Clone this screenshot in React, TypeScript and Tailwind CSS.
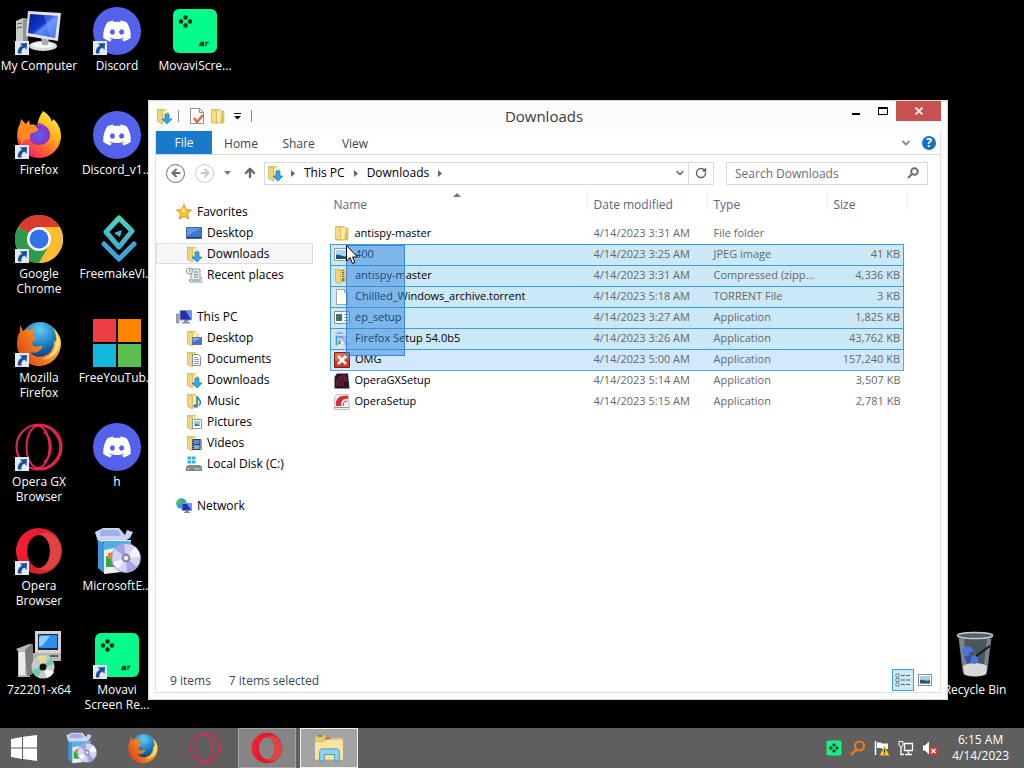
import React from 'react';
import { FaDiscord } from 'react-icons/fa';
import { ArrowLeft, ArrowRight, ArrowUp, ChevronDown, RotateCw } from 'lucide-react';

type IconProps = { className?: string };

/* ---------- Large icons ---------- */

const MyComputerIcon = ({ className }: IconProps) => (
  <svg viewBox="0 0 48 48" className={className} aria-hidden="true">
    <defs>
      <linearGradient id="mc-screen" x1="0" y1="0" x2="1" y2="1">
        <stop offset="0" stopColor="#0a1f8f" />
        <stop offset="0.45" stopColor="#1236c9" />
        <stop offset="0.55" stopColor="#5f8df5" />
        <stop offset="1" stopColor="#2a55e0" />
      </linearGradient>
    </defs>
    <path d="M1 14l7-3 5 1v24l-5 2-7-3z" fill="#c9cbc8" />
    <path d="M8 11l5 1v24l-5 2z" fill="#90938f" />
    <path d="M2 17l5-1M2 21l5-1" stroke="#555" />
    <ellipse cx="28" cy="39" rx="14" ry="5" fill="#d9dbdc" />
    <ellipse cx="28" cy="38" rx="11" ry="3" fill="#f4f5f5" />
    <path d="M26 30l8 1-1 7h-6z" fill="#a9adb0" />
    <path d="M13 4l33 2-3 28-32-5z" fill="#e1e3e4" />
    <path d="M15 7l28 2-3 22-27-5z" fill="url(#mc-screen)" />
    <path d="M29 8l14 1-3 22-5-1z" fill="#8fb4ff" opacity="0.35" />
  </svg>
);

const DiscordIcon = ({ className }: IconProps) => (
  <span className={`flex items-center justify-center rounded-full bg-[#5462eb] text-white ${className}`}>
    <FaDiscord className="size-[30px]" />
  </span>
);

const MovaviIcon = ({ className }: IconProps) => (
  <svg viewBox="0 0 48 48" className={className} aria-hidden="true">
    <rect x="2" y="2" width="44" height="44" rx="6" fill="#05fb8a" />
    <g fill="#052a18">
      <circle cx="14.500" cy="10.500" r="2.200" />
      <circle cx="10" cy="14.500" r="2.200" />
      <circle cx="19" cy="14.500" r="2.200" />
      <circle cx="14.500" cy="18.500" r="2.200" />
    </g>
    <path d="M29.500 35.500h3v3h-3.500v-1.500h3M35 39v-3.500h2.500" fill="none" stroke="#063d22" strokeWidth="1.300" />
  </svg>
);

const FirefoxIcon = ({ className }: IconProps) => (
  <svg viewBox="0 0 48 48" className={className} aria-hidden="true">
    <defs>
      <linearGradient id="fx-flame" x1="0.850" y1="0.050" x2="0.200" y2="0.950">
        <stop offset="0" stopColor="#fff44f" />
        <stop offset="0.350" stopColor="#ffb31a" />
        <stop offset="0.650" stopColor="#ff6a2f" />
        <stop offset="1" stopColor="#f5156c" />
      </linearGradient>
      <radialGradient id="fx-globe">
        <stop offset="0" stopColor="#5a5ff0" />
        <stop offset="1" stopColor="#8b2fc9" />
      </radialGradient>
    </defs>
    <path d="M28 0c6 4 8 7 9 11l1-3c5 4 8 10 8 17 0 12-10 22-22 22S2 37 2 25c0-5 1-9 3-12l1-5 5 5 3-4 1 5c3-1 5 0 7 1 1-6 3-11 6-15z" fill="url(#fx-flame)" />
    <path d="M24 14c6-1 11 4 11 10s-5 10-11 10-10-4-10-9c0-6 4-10 10-11z" fill="url(#fx-globe)" />
    <path d="M5 13l6 1 4 1c4-1 6 0 8 3 1 2-4 4-7 4-1 2-2 3 0 6-5-1-8 2-9 5-4-5-5-14-2-20z" fill="#ff8a1f" />
    <path d="M22 15c5-1 8 2 10 3-2-4-5-6-9-6z" fill="#a93cdd" />
  </svg>
);

const OldFirefoxIcon = ({ className }: IconProps) => (
  <svg viewBox="0 0 48 48" className={className} aria-hidden="true">
    <defs>
      <radialGradient id="ofx-globe" cx="0.500" cy="0.200" r="0.800">
        <stop offset="0" stopColor="#62cdf3" />
        <stop offset="0.600" stopColor="#1573ba" />
        <stop offset="1" stopColor="#0b2f6b" />
      </radialGradient>
      <linearGradient id="ofx-tail" x1="1" y1="0.200" x2="0" y2="0.800">
        <stop offset="0" stopColor="#ffe95c" />
        <stop offset="0.400" stopColor="#f98f24" />
        <stop offset="1" stopColor="#d93f13" />
      </linearGradient>
    </defs>
    <circle cx="25" cy="22" r="19" fill="url(#ofx-globe)" />
    <path d="M5 6l3 6c3-2 5-2 7-1l5-1-2 5 1 3c3 0 2 2 0 3l-2 3c0 3 4 5 8 3 3-1 3 1 1 3-3 4-8 5-11 2 2 5 8 7 14 5 7-2 11-9 10-16l2 2c1-5-1-11-3-14 5 4 8 10 8 15 0 13-10 23-22 23S2 37 2 25C2 19 3 15 5 13z" fill="url(#ofx-tail)" />
    <path d="M42 16c1 11-4 21-15 24 11 1 18-8 17-19z" fill="#fff3a0" opacity="0.700" />
  </svg>
);

const ChromeIcon = ({ className }: IconProps) => (
  <svg viewBox="0 0 48 48" className={className} aria-hidden="true">
    <circle cx="24" cy="24" r="24" fill="#f9bd2d" />
    <path d="M24 24L3.200 12A24 24 0 0 1 44.800 12z" fill="#da3b2f" />
    <path d="M24 24L3.200 12A24 24 0 0 0 24 48L34.400 30z" fill="#2e9a4d" />
    <path d="M24 12h20.800A24 24 0 0 1 24 48l10.400-18z" fill="#f9bd2d" />
    <circle cx="24" cy="24" r="12" fill="#fff" />
    <circle cx="24" cy="24" r="9.500" fill="#2f74e8" />
  </svg>
);

const FreemakeIcon = ({ className }: IconProps) => (
  <svg viewBox="0 0 48 48" className={className} aria-hidden="true">
    <defs>
      <linearGradient id="fm" x1="0" y1="0" x2="0" y2="48" gradientUnits="userSpaceOnUse">
        <stop offset="0" stopColor="#4fd5b8" />
        <stop offset="1" stopColor="#3c9be0" />
      </linearGradient>
    </defs>
    <path d="M26 3l13 13-13 16-13-15z" fill="none" stroke="url(#fm)" strokeWidth="5" strokeLinejoin="round" />
    <path d="M11 29l15 15 15-15" fill="none" stroke="#3fa3d8" strokeWidth="5" strokeLinecap="round" strokeLinejoin="round" />
    <path d="M21 18l8-3-2 7z" fill="#45b9c9" />
  </svg>
);

const FreeYouTubeIcon = ({ className }: IconProps) => (
  <span className={`grid grid-cols-2 gap-0.5 ${className}`}>
    <span className="bg-[#ec3d40]" />
    <span className="bg-[#ff8500]" />
    <span className="bg-[#12b9db]" />
    <span className="bg-[#58bf50]" />
  </span>
);

const OperaGxIcon = ({ className }: IconProps) => (
  <svg viewBox="0 0 48 48" className={className} aria-hidden="true" fill="none" stroke="#e3264f">
    <circle cx="24" cy="24" r="22.500" strokeWidth="2.200" />
    <ellipse cx="23" cy="24" rx="11.500" ry="21" strokeWidth="2" />
    <path d="M20 3c12-3 25 8 25 21S32 48 20 45" strokeWidth="1.500" />
    <path d="M29 9c9 6 9 24 0 30" strokeWidth="2" />
  </svg>
);

const OperaIcon = ({ className }: IconProps) => (
  <svg viewBox="0 0 48 48" className={className} aria-hidden="true">
    <defs>
      <linearGradient id="op" x1="0" y1="0" x2="1" y2="0.300">
        <stop offset="0" stopColor="#ff2234" />
        <stop offset="0.500" stopColor="#e3192d" />
        <stop offset="1" stopColor="#c9302f" />
      </linearGradient>
    </defs>
    <path fillRule="evenodd" d="M24 1a23 23 0 1 0 0 46a23 23 0 1 0 0-46zM24 8c6 0 11 7 11 16s-5 17-11 17-12-8-12-17S18 8 24 8z" fill="url(#op)" />
    <path d="M24 8c9-7 22 2 22 16S33 48 24 41c6 0 11-8 11-17S30 8 24 8z" fill="#fb6a5e" opacity="0.400" />
  </svg>
);

const InstallerIcon = ({ className }: IconProps) => (
  <svg viewBox="0 0 48 48" className={className} aria-hidden="true">
    <path d="M2 5l8-4h16l6 7 2-5 6 2-3 6-7 4H5z" fill="#c9d4f2" />
    <path d="M8 3h17l3 6H7z" fill="#a3aee2" />
    <path d="M5 13l6 3v30l-6-5z" fill="#3b9ad9" />
    <path d="M11 13h27v31l-27 3z" fill="#eaf1fa" />
    <path d="M11 14h27v4l-27 5z" fill="#53afe5" />
    <path d="M13 29h8v11h-8z" fill="#38a843" />
    <path d="M15 26l5-1v6l-5 1z" fill="#f0862b" />
    <circle cx="33" cy="31" r="14.500" fill="#d3d4f3" stroke="#9698bd" />
    <path d="M33 31L22 22a14 14 0 0 1 9-5z" fill="#a5a3e8" />
    <path d="M33 31l11 9a14 14 0 0 1-10 5z" fill="#a5a3e8" />
    <path d="M33 31l9-11a14 14 0 0 1 5 10zM33 31L20 35a14 14 0 0 0 5 7z" fill="#f5f5ff" />
    <circle cx="33" cy="31" r="3.500" fill="#c9cbdc" stroke="#70728c" strokeWidth="1.500" />
    <circle cx="33" cy="31" r="1.500" fill="#fff" />
  </svg>
);

const SevenZipIcon = ({ className }: IconProps) => (
  <svg viewBox="0 0 48 48" className={className} aria-hidden="true">
    <path d="M20 0h26v22H20z" fill="#d4d3cc" />
    <path d="M23 3h20v16H23z" fill="#14264b" />
    <path d="M24 4h18v13H24z" fill="#2f8fe8" />
    <path d="M26 5h9l-8 10h-3V7z" fill="#8cd0ff" />
    <path d="M15 22h31v8H15z" fill="#b5b4ae" />
    <path d="M35 25h8" stroke="#444" strokeWidth="1.500" />
    <path d="M1 18l13-5h4l-3 6v27H3V20z" fill="#bbbab7" />
    <path d="M4 21h6v23H4z" fill="#ecebea" />
    <path d="M10 19l6-6 2 2v28l-6 3z" fill="#7c7b79" />
    <circle cx="28" cy="36" r="11.500" fill="#c5cbc8" />
    <path d="M28 36l-6-10a12 12 0 0 1 10-1z" fill="#e3df92" />
    <path d="M28 36l-11 3a12 12 0 0 0 6 7zM28 36l11-3a12 12 0 0 0-4-6z" fill="#66c9b7" />
    <path d="M28 36l4 11a12 12 0 0 0 7-6z" fill="#f5f5f5" />
    <circle cx="28" cy="36" r="3.500" fill="#111" />
  </svg>
);

const RecycleBinIcon = ({ className }: IconProps) => (
  <svg viewBox="0 0 48 48" className={className} aria-hidden="true">
    <path d="M7 4l5 39c4 4 20 4 24 0l5-39z" fill="#4b555b" />
    <path d="M8 8l4 33h5L13 8zM36 8l-4 33h4l4-33z" fill="#8d979c" opacity="0.700" />
    <path d="M12 35c5-4 19-4 24 0l-1 8c-5 3-17 3-22 0z" fill="#d7d9d8" />
    <path d="M11 19l4-4 5 1 3 4-5 1 1 4-6 2zM20 26l5-3 3 7-4 3-5-1z" fill="#4c73df" />
    <path d="M13 26l5-2 2 6-4 2z" fill="#2f4fb5" />
    <path d="M25 25l14-10" stroke="#10171b" strokeWidth="2" />
    <ellipse cx="24" cy="4.500" rx="17.500" ry="3" fill="#566167" stroke="#c3cacc" strokeWidth="1.500" />
  </svg>
);

const ExplorerIcon = ({ className }: IconProps) => (
  <svg viewBox="0 0 34 30" className={className} aria-hidden="true">
    <path d="M2 4l2-3h8l2 3h16l2 4v20H2z" fill="#e2c76c" />
    <path d="M5 2h5" stroke="#35a35d" strokeWidth="2" />
    <path d="M13 5h6" stroke="#d3603d" strokeWidth="2" />
    <path d="M21 7h8" stroke="#4596d8" strokeWidth="2" />
    <path d="M2 9h10l3-3h17v21H2z" fill="#f7e6a2" />
    <path d="M7 29V19c0-2 1-3 3-3h15c2 0 3 1 3 3v10h-5v-7H12v7z" fill="#8fd3ef" stroke="#3f95c5" />
  </svg>
);

/* ---------- Small icons ---------- */

const FolderBase = () => (
  <>
    <path d="M2 1h8v3h2.500v11H5L2 14z" fill="#e3c766" />
    <path d="M4 2.500h6l1 1V15H4z" fill="#f8eeb2" />
    <path d="M1.500 1L6.500 3v13l-5-2.500z" fill="#efd577" stroke="#bfa24c" strokeWidth="0.600" />
  </>
);

const Small = ({ children }: { children: React.ReactNode }) => (
  <svg viewBox="0 0 16 16" className="size-4 shrink-0" aria-hidden="true">
    {children}
  </svg>
);

const FolderIcon = () => (
  <Small>
    <path d="M2 1.500h8l1 1.500h3v12H2z" fill="#e9cd6b" stroke="#cdae50" strokeWidth="0.600" />
    <path d="M7 3h4v11H7z" fill="#f9efb4" />
    <path d="M1.500 1.500L6.500 3v12.500l-5-1.500z" fill="#f3dc82" stroke="#cdae50" strokeWidth="0.600" />
    <path d="M10.500 8l3.500-1v8h-3.500z" fill="#dfbf57" />
  </Small>
);

const DownloadsIcon = () => (
  <Small>
    <FolderBase />
    <path d="M9 6h4v5h3l-5 5-5-5h3z" fill="#35a7e6" stroke="#1873b5" strokeWidth="0.700" />
  </Small>
);

const StarIcon = () => (
  <Small>
    <path d="M8 0.500l2.200 5 5.300.500-4 3.700 1.200 5.300L8 12.300 3.300 15l1.200-5.300-4-3.700 5.300-.500z" fill="#fcc52f" stroke="#d98a1d" strokeWidth="0.900" />
    <path d="M8 3l1 4-4 1z" fill="#fff2a8" />
  </Small>
);

const DesktopSmallIcon = () => (
  <Small>
    <path d="M0.500 2.500h15v11H0.500z" fill="#3d78cf" stroke="#51617e" />
    <path d="M1 3h14L1 11z" fill="#5e9beb" />
    <path d="M1 12.500h14" stroke="#24406f" />
  </Small>
);

const RecentIcon = () => (
  <Small>
    <path d="M5 2h9v9h2v4H5c-1.500 0-2-1-2-2h2z" fill="#e6ebee" stroke="#8b979e" />
    <path d="M8 5h4M8 7.500h4M8 10h4M6 13h8" stroke="#74828a" />
    <circle cx="3.500" cy="4" r="3" fill="#f5f7f8" stroke="#8b979e" />
    <path d="M3.500 2.500V4H5" stroke="#667" fill="none" strokeWidth="0.800" />
  </Small>
);

const ThisPcIcon = () => (
  <Small>
    <path d="M0.500 5h2.500v9H0.500z" fill="#aab0b4" stroke="#6f7679" strokeWidth="0.700" />
    <path d="M4 1.500h11.500v9.500H4z" fill="#1d2fb4" stroke="#9097a5" />
    <path d="M9.500 2H15v8.500z" fill="#6f8df0" />
    <path d="M8 11h4v2H8zM6 13h8v1.500H6z" fill="#8b9196" />
  </Small>
);

const DesktopFolderIcon = () => (
  <Small>
    <FolderBase />
    <path d="M6.500 7.500h9v7h-9z" fill="#4374cc" stroke="#60718f" />
    <path d="M7 8h8l-8 4z" fill="#7ba8ee" />
  </Small>
);

const DocumentsIcon = () => (
  <Small>
    <FolderBase />
    <path d="M6.500 3.500h6l2 2v9h-8z" fill="#fff" stroke="#8b9098" />
    <path d="M8 6.500h4M8 8.500h5M8 10.500h5M8 12.500h5" stroke="#8290a5" strokeWidth="0.900" />
  </Small>
);

const MusicIcon = () => (
  <Small>
    <FolderBase />
    <path d="M11 3v9.500M11 3c0 3 3.500 3 3.500 6.500 0 1-.500 2-1.500 3" fill="none" stroke="#2b83c2" strokeWidth="1.600" />
    <ellipse cx="9.500" cy="13" rx="2.200" ry="1.700" fill="#2b83c2" />
  </Small>
);

const PicturesIcon = () => (
  <Small>
    <FolderBase />
    <path d="M6.500 5.500h9v9h-9z" fill="#fff" stroke="#8e99a6" />
    <path d="M8 7h6v5H8z" fill="#9cc8ea" />
    <path d="M8 12l2.500-2.500L14 12z" fill="#3f6f8e" />
  </Small>
);

const VideosIcon = () => (
  <Small>
    <FolderBase />
    <path d="M6 4h9.500v11H6z" fill="#343b46" />
    <path d="M8 5h5.500v4H8z" fill="#4c92d6" />
    <path d="M8 10h5.500v4H8z" fill="#79b0db" />
    <path d="M7 4.500v10M14.500 4.500v10" stroke="#fff" strokeDasharray="1 1.200" strokeWidth="0.900" />
  </Small>
);

const DiskIcon = () => (
  <Small>
    <path d="M1.500 0.500h3.500v3H1.500zM6 0.500h3.500v3H6zM1.500 4.500h3.500v3H1.500zM6 4.500h3.500v3H6z" fill="#27b7d6" />
    <path d="M2 9h12l2 2v4H0v-4z" fill="#7e909a" />
    <path d="M0.500 11h15v3.500H0.500z" fill="#a5b6c0" stroke="#5e6e78" strokeWidth="0.700" />
    <path d="M3 13h6" stroke="#51616b" />
    <path d="M12 13h2" stroke="#42c95b" strokeWidth="1.200" />
  </Small>
);

const NetworkIcon = () => (
  <Small>
    <circle cx="5.500" cy="5.500" r="5.300" fill="#2b9fd6" />
    <path d="M2 2.500c3-2 4 0 3 2s-3 1-4 3c-1-2-.500-4 1-5zM6 6l3-3 1 3-2 4H6z" fill="#58bf5c" />
    <path d="M6 5.500h9.500v7H6z" fill="#1c32bd" stroke="#8d97ac" />
    <path d="M11 6h4v6z" fill="#7590f1" />
    <path d="M9.500 13h3v1.500h-3zM8 14.500h6" fill="#848b92" stroke="#848b92" />
  </Small>
);

const JpegIcon = () => (
  <Small>
    <path d="M0.500 1.500h15v12H0.500z" fill="#fff" stroke="#9b9b9b" />
    <path d="M2 3h12v9H2z" fill="#a8d8f0" />
    <path d="M2 8c4-1 7 3 12 1v3H2z" fill="#264f70" />
  </Small>
);

const ZipIcon = () => (
  <Small>
    <FolderBase />
    <path d="M7 1.500h5.500v13H7z" fill="#ecd16f" />
    <path d="M9 2v9" stroke="#666" strokeWidth="2" strokeDasharray="1 1" />
    <path d="M8 10h2.500v3.500H8z" fill="#7a7a7a" />
  </Small>
);

const BlankFileIcon = () => (
  <Small>
    <path d="M2.500 0.500h8l3 3v12h-11z" fill="#fff" stroke="#a5a5a5" />
    <path d="M10.500 0.500v3h3" fill="none" stroke="#a5a5a5" />
  </Small>
);

const AppIcon = () => (
  <Small>
    <path d="M0.500 1.500h15v12H0.500z" fill="#fff" stroke="#8f8f8f" />
    <path d="M2 4h6v7H2z" fill="#3f7565" />
    <path d="M10 4.500h4M10 7.500h4M10 10.500h4" stroke="#9a9a9a" />
  </Small>
);

const FirefoxSetupIcon = () => <InstallerIcon className="size-4 shrink-0" />;

const OmgIcon = () => (
  <Small>
    <path d="M0.500 0.500h15v15H0.500z" fill="#c63c26" stroke="#83210f" />
    <path d="M1 1h14v6L1 9z" fill="#e06a4c" />
    <path d="M4 4l8 8M12 4l-8 8" stroke="#fff" strokeWidth="2.600" />
  </Small>
);

const GxSetupIcon = () => (
  <Small>
    <path d="M3 0.500h11l1.500 15H0.500V4z" fill="#2c1626" />
    <path d="M3 13C2 6 6 2 12 3M6 13c-1-6 2-9 7-8M9 13c-1-4 1-7 5-6" fill="none" stroke="#b41f4e" />
  </Small>
);

const OperaSetupIcon = () => (
  <Small>
    <path d="M3 0.500h11l1.500 15H0.500V4z" fill="#f4f3f3" stroke="#b2adad" strokeWidth="0.800" />
    <path d="M2 12C1 4 6 1 14 2v3C9 4 7 7 7 12z" fill="#db2b34" />
    <path d="M9 12c0-3 1-5 4-5" stroke="#db2b34" fill="none" />
    <path d="M1 13.500h14" stroke="#9b9696" />
  </Small>
);

const ShortcutBadge = () => (
  <svg viewBox="0 0 14 14" className="absolute bottom-0 left-0 size-3.5" aria-hidden="true">
    <path d="M0 0h14v14H0z" fill="#dfe8f4" />
    <path d="M3 12.500C2.500 8 4.500 5.500 7 5L5 2.500l7-.500-.500 7L9.500 6.500C7 7.500 6 9.500 6.500 12.500z" fill="#1c4f94" />
  </svg>
);

/* ---------- Desktop ---------- */

type DesktopItem = {
  label: string;
  icon: React.FC<IconProps>;
  shortcut?: boolean;
  last?: boolean;
};

const desktopItems: DesktopItem[] = [
  { label: 'My Computer', icon: MyComputerIcon, shortcut: true },
  { label: 'Firefox', icon: FirefoxIcon, shortcut: true },
  { label: 'Google Chrome', icon: ChromeIcon, shortcut: true },
  { label: 'Mozilla Firefox', icon: OldFirefoxIcon, shortcut: true },
  { label: 'Opera GX Browser', icon: OperaGxIcon, shortcut: true },
  { label: 'Opera Browser', icon: OperaIcon, shortcut: true },
  { label: '7z2201-x64', icon: SevenZipIcon },
  { label: 'Discord', icon: DiscordIcon, shortcut: true },
  { label: 'Discord_v1...', icon: DiscordIcon },
  { label: 'FreemakeVi...', icon: FreemakeIcon },
  { label: 'FreeYouTub...', icon: FreeYouTubeIcon },
  { label: 'h', icon: DiscordIcon },
  { label: 'MicrosoftE...', icon: InstallerIcon },
  { label: 'Movavi Screen Re...', icon: MovaviIcon, shortcut: true },
  { label: 'MovaviScre...', icon: MovaviIcon },
  { label: 'Recycle Bin', icon: RecycleBinIcon, last: true },
];

const DesktopIcons = () => (
  <div className="grid grid-flow-col auto-cols-[78px] grid-rows-[repeat(7,104px)]">
    {desktopItems.map(({ label, icon: Icon, shortcut, last }) => (
      <button
        key={label}
        className={`flex flex-col items-center pt-[7px] text-white ${last ? 'col-start-13 row-start-7' : ''}`}
      >
        <span className="relative mb-[3px] block size-12">
          <Icon className="size-12" />
          {shortcut && <ShortcutBadge />}
        </span>
        <span className="max-w-full text-center leading-[15px]">{label}</span>
      </button>
    ))}
  </div>
);

/* ---------- Explorer window ---------- */

const TitleBar = () => (
  <div className="relative flex h-[30px] shrink-0 items-center">
    <div className="flex items-center pl-px">
      <DownloadsIcon />
      <span className="ml-1.5 h-3 w-px bg-[#8a8a8a]" />
      <button aria-label="Properties" className="ml-2.5">
        <Small>
          <path d="M1.500 0.500h9l4 4v11h-13z" fill="#fff" stroke="#8a8f99" />
          <path d="M10.500 0.500v4h4" fill="none" stroke="#8a8f99" />
          <path d="M5 10l3 4 6-7" fill="none" stroke="#e2683b" strokeWidth="2.500" />
        </Small>
      </button>
      <button aria-label="New folder" className="ml-[5px]">
        <FolderIcon />
      </button>
      <button aria-label="Customize Quick Access Toolbar" className="ml-2">
        <svg viewBox="0 0 7 7" className="size-[7px]" aria-hidden="true">
          <path d="M0 0h7v1H0zM0 3h7L3.500 6.500z" fill="#111" />
        </svg>
      </button>
      <span className="ml-2.5 h-3 w-px bg-[#8a8a8a]" />
    </div>
    <h1 className="pointer-events-none absolute inset-x-0 pr-2 text-center text-[15px] leading-7 text-[#3a3a3a]">
      Downloads
    </h1>
    <div className="ml-auto flex h-full items-start">
      <button aria-label="Minimize" className="flex h-5 w-[27px] items-center justify-center">
        <span className="mt-1.5 h-0.5 w-2 bg-black" />
      </button>
      <button aria-label="Maximize" className="flex h-5 w-[27px] items-center justify-center">
        <span className="h-2 w-2.5 border border-t-2 border-black" />
      </button>
      <button aria-label="Close" className="flex h-5 w-[45px] items-center justify-center bg-[#c75050]">
        <svg viewBox="0 0 8 8" className="size-2" aria-hidden="true">
          <path d="M0.500 0.500l7 7M7.500 0.500l-7 7" stroke="#fff" strokeWidth="1.600" />
        </svg>
      </button>
    </div>
  </div>
);

const RibbonTabs = () => (
  <div className="flex h-6 shrink-0 items-stretch border-b border-[#dadbdc] text-[#444]">
    <button className="w-14 bg-[#1979ca] text-white">File</button>
    <button className="w-[58px] pt-0.5">Home</button>
    <button className="w-[57px] pt-0.5">Share</button>
    <button className="w-14 pt-0.5">View</button>
    <div className="ml-auto flex items-center gap-2.5 pr-1">
      <button aria-label="Expand the Ribbon">
        <ChevronDown className="size-3 text-[#8f8f8f]" strokeWidth={4} />
      </button>
      <button
        aria-label="Help"
        className="flex size-3.5 items-center justify-center rounded-full bg-[#1a6fc4] font-bold text-white"
      >
        ?
      </button>
    </div>
  </div>
);

const Caret = () => (
  <svg viewBox="0 0 4 7" className="h-[7px] w-1" aria-hidden="true">
    <path d="M0 0l4 3.500L0 7z" fill="#666" />
  </svg>
);

const AddressRow = () => (
  <div className="flex h-9 shrink-0 items-center pr-3 pl-2.5">
    <button
      aria-label="Back"
      className="flex size-[19px] items-center justify-center rounded-full border border-[#6e6e6e] text-[#6e6e6e]"
    >
      <ArrowLeft className="size-3" strokeWidth={4} />
    </button>
    <button
      aria-label="Forward"
      disabled
      className="ml-2.5 flex size-[19px] items-center justify-center rounded-full border border-[#c9c9c9] text-[#c9c9c9]"
    >
      <ArrowRight className="size-3" strokeWidth={4} />
    </button>
    <button aria-label="Recent locations" className="ml-2.5">
      <svg viewBox="0 0 7 4" className="h-1 w-[7px]" aria-hidden="true">
        <path d="M0 0h7L3.500 4z" fill="#777" />
      </svg>
    </button>
    <button aria-label="Up" className="ml-3">
      <ArrowUp className="size-3.5 text-[#666]" strokeWidth={4} />
    </button>
    <div className="ml-[7px] flex h-[23px] flex-1 items-center border border-[#d9d9d9]">
      <span className="ml-0.5">
        <DownloadsIcon />
      </span>
      <nav aria-label="Address" className="ml-2 flex items-center gap-[9px]">
        <Caret />
        <a href="#this-pc">This PC</a>
        <Caret />
        <a href="#downloads">Downloads</a>
        <Caret />
      </nav>
      <button aria-label="Previous locations" className="ml-auto flex w-4 justify-center">
        <ChevronDown className="size-3 text-[#666]" strokeWidth={3} />
      </button>
      <button
        aria-label="Refresh"
        className="flex h-full w-[25px] items-center justify-center border-l border-[#d9d9d9]"
      >
        <RotateCw className="size-3 text-[#666]" strokeWidth={3} />
      </button>
    </div>
    <div className="ml-3 flex h-[23px] w-[202px] items-center border border-[#d9d9d9] px-2">
      <input
        type="text"
        aria-label="Search Downloads"
        placeholder="Search Downloads"
        className="h-full w-full min-w-0 bg-transparent outline-none placeholder:text-[#6d6d6d]"
      />
      <svg viewBox="0 0 12 12" className="size-3 shrink-0" fill="none" stroke="#6d6d6d" strokeWidth="2" aria-hidden="true">
        <circle cx="7.500" cy="4.500" r="3.300" />
        <path d="M5 7L1 11" />
      </svg>
    </div>
  </div>
);

type NavGroup = {
  title: string;
  icon: React.FC;
  items: { label: string; icon: React.FC; active?: boolean }[];
};

const navGroups: NavGroup[] = [
  {
    title: 'Favorites',
    icon: StarIcon,
    items: [
      { label: 'Desktop', icon: DesktopSmallIcon },
      { label: 'Downloads', icon: DownloadsIcon, active: true },
      { label: 'Recent places', icon: RecentIcon },
    ],
  },
  {
    title: 'This PC',
    icon: ThisPcIcon,
    items: [
      { label: 'Desktop', icon: DesktopFolderIcon },
      { label: 'Documents', icon: DocumentsIcon },
      { label: 'Downloads', icon: DownloadsIcon },
      { label: 'Music', icon: MusicIcon },
      { label: 'Pictures', icon: PicturesIcon },
      { label: 'Videos', icon: VideosIcon },
      { label: 'Local Disk (C:)', icon: DiskIcon },
    ],
  },
  { title: 'Network', icon: NetworkIcon, items: [] },
];

const NavPane = () => (
  <nav aria-label="Folders" className="flex w-[157px] shrink-0 flex-col gap-[21px] pt-2.5">
    {navGroups.map(({ title, icon: GroupIcon, items }) => (
      <div key={title}>
        <a href="#group" className="flex h-[21px] items-center gap-[5px] pl-5">
          <GroupIcon />
          {title}
        </a>
        {items.map(({ label, icon: Icon, active }) => (
          <a
            key={label}
            href="#folder"
            className={`flex h-[21px] items-center gap-[5px] border pl-[29px] ${
              active ? 'border-[#dedede] bg-[#f7f7f7]' : 'border-transparent'
            }`}
          >
            <Icon />
            {label}
          </a>
        ))}
      </div>
    ))}
  </nav>
);

type FileRow = {
  name: string;
  icon: React.FC;
  date: string;
  type: string;
  size: string;
  state?: 'selected' | 'focused';
};

const files: FileRow[] = [
  { name: 'antispy-master', icon: FolderIcon, date: '4/14/2023 3:31 AM', type: 'File folder', size: '' },
  { name: '400', icon: JpegIcon, date: '4/14/2023 3:25 AM', type: 'JPEG image', size: '41 KB', state: 'selected' },
  { name: 'antispy-master', icon: ZipIcon, date: '4/14/2023 3:31 AM', type: 'Compressed (zipp...', size: '4,336 KB', state: 'selected' },
  { name: 'Chillled_Windows_archive.torrent', icon: BlankFileIcon, date: '4/14/2023 5:18 AM', type: 'TORRENT File', size: '3 KB', state: 'selected' },
  { name: 'ep_setup', icon: AppIcon, date: '4/14/2023 3:27 AM', type: 'Application', size: '1,825 KB', state: 'selected' },
  { name: 'Firefox Setup 54.0b5', icon: FirefoxSetupIcon, date: '4/14/2023 3:26 AM', type: 'Application', size: '43,762 KB', state: 'selected' },
  { name: 'OMG', icon: OmgIcon, date: '4/14/2023 5:00 AM', type: 'Application', size: '157,240 KB', state: 'focused' },
  { name: 'OperaGXSetup', icon: GxSetupIcon, date: '4/14/2023 5:14 AM', type: 'Application', size: '3,507 KB' },
  { name: 'OperaSetup', icon: OperaSetupIcon, date: '4/14/2023 5:15 AM', type: 'Application', size: '2,781 KB' },
];

const rowStyles = {
  selected: 'border border-[#3c9fd0] bg-[#cbe8f6]',
  focused: 'border border-[#5fa9dc] bg-[#d1e8ff]',
};

const FileList = () => (
  <div className="relative ml-[17px] min-w-0 flex-1">
    <table className="w-[573px] table-fixed border-collapse text-left">
      <colgroup>
        <col className="w-[257px]" />
        <col className="w-[120px]" />
        <col className="w-[120px]" />
        <col className="w-[76px]" />
      </colgroup>
      <thead className="text-[#5a667c]">
        <tr className="h-8 align-top">
          <th className="p-0 font-normal" aria-sort="ascending">
            <div className="h-[18px] border-r border-[#ececec] pt-[5px] pl-[3px] leading-[18px]">Name</div>
          </th>
          <th className="p-0 font-normal">
            <div className="h-[18px] border-r border-[#ececec] pt-[5px] pl-1.5 leading-[18px]">Date modified</div>
          </th>
          <th className="p-0 font-normal">
            <div className="h-[18px] border-r border-[#ececec] pt-[5px] pl-1.5 leading-[18px]">Type</div>
          </th>
          <th className="p-0 font-normal">
            <div className="-mr-1 h-[18px] border-r border-[#ececec] pt-[5px] pl-1.5 leading-[18px]">Size</div>
          </th>
        </tr>
      </thead>
      <tbody className="text-[11px] text-[#686868]">
        {files.map(({ name, icon: Icon, date, type, size, state }) => (
          <tr key={name + type} className={`h-[21px] ${state ? rowStyles[state] : ''}`}>
            <td className="p-0 pl-[3px] text-black">
              <div className="flex items-center gap-[5px]">
                <Icon />
                {name}
              </div>
            </td>
            <td className="p-0 pl-1.5 whitespace-nowrap">{date}</td>
            <td className="p-0 pl-1.5 whitespace-nowrap">{type}</td>
            <td className="p-0 pr-[3px] text-right whitespace-nowrap">{size}</td>
          </tr>
        ))}
      </tbody>
    </table>
    <svg viewBox="0 0 8 4" className="absolute top-0.5 left-[123px] h-1 w-2" aria-hidden="true">
      <path d="M0 4l4-4 4 4z" fill="#777" />
    </svg>
    {/* Rubber band selection */}
    <div className="absolute top-[54px] left-4 h-[111px] w-[59px] border border-[#3a86d8] bg-[#2f86dd]/50" />
    <svg viewBox="0 0 12 19" className="absolute top-[54px] left-4 h-[19px] w-3" aria-hidden="true">
      <path d="M0.500 0.500v15.500l3.500-3.500 2.500 6 2.500-1-2.500-5.500h5z" fill="#fff" stroke="#000" />
    </svg>
  </div>
);

const StatusBar = () => (
  <div className="flex h-6 shrink-0 items-center gap-[18px] pl-3.5 text-[#33475b]">
    <span className="pt-0.5">9 items</span>
    <span className="pt-0.5">7 items selected</span>
    <div className="ml-auto flex pr-1">
      <button
        aria-label="Details view"
        className="flex size-[22px] items-center justify-center border border-[#3da5d9] bg-[#cbe8f6]"
      >
        <Small>
          <path d="M1 2h3v3H1zM1 6.500h3v3H1zM1 11h3v3H1z" fill="#fff" stroke="#6d7f8e" />
          <path d="M6 3.500h4M11 3.500h4M6 8h4M11 8h4M6 12.500h4M11 12.500h4" stroke="#50616f" />
        </Small>
      </button>
      <button aria-label="Large icons view" className="flex size-[22px] items-center justify-center">
        <svg viewBox="0 0 14 12" className="h-3 w-3.5" aria-hidden="true">
          <path d="M0.500 0.500h13v11H0.500z" fill="#fff" stroke="#8a8a8a" />
          <path d="M2 2h10v7.500H2z" fill="#a3cfec" />
          <path d="M2 6c4-1 6 2 10 0v3.500H2z" fill="#2e5473" />
        </svg>
      </button>
    </div>
  </div>
);

const ExplorerWindow = () => (
  <section
    aria-label="Downloads"
    className="absolute top-[100px] right-[76px] bottom-7 left-[148px] flex flex-col border border-[#d5d5d5] bg-[#fcfcfc] px-1.5 pb-1.5 text-black"
  >
    <TitleBar />
    <div className="flex min-h-0 flex-1 flex-col border border-t-0 border-[#e0e0e0] bg-white">
      <RibbonTabs />
      <AddressRow />
      <div className="flex min-h-0 flex-1">
        <NavPane />
        <FileList />
      </div>
      <StatusBar />
    </div>
  </section>
);

/* ---------- Taskbar ---------- */

const taskButtons = [
  { label: 'Setup', icon: <InstallerIcon className="size-8" />, style: 'border-transparent' },
  { label: 'Mozilla Firefox', icon: <OldFirefoxIcon className="size-8" />, style: 'border-transparent' },
  { label: 'Opera GX', icon: <OperaGxIcon className="size-8 opacity-70" />, style: 'border-transparent' },
  { label: 'Opera', icon: <OperaIcon className="size-8" />, style: 'border-[#a5a5a5] bg-[#858585]' },
  { label: 'File Explorer', icon: <ExplorerIcon className="h-7 w-8" />, style: 'border-[#f0f0f0] bg-[#a3a3a3]' },
];

const Taskbar = () => (
  <footer className="relative flex h-10 shrink-0 items-stretch bg-[#5f5f5f] text-white">
    <button aria-label="Start" className="flex w-12 items-center justify-center">
      <svg viewBox="0 0 26 26" className="size-[26px]" aria-hidden="true">
        <path d="M0 4l11-2v10.500H0zM12 1.800L26 0v12.500H12zM0 13.500h11V24L0 22zM12 13.500h14V26l-14-2z" fill="#fff" />
      </svg>
    </button>
    <div className="ml-1 flex gap-1">
      {taskButtons.map(({ label, icon, style }) => (
        <button key={label} aria-label={label} className={`flex w-[58px] items-center justify-center border ${style}`}>
          {icon}
        </button>
      ))}
    </div>
    <div className="ml-auto flex items-center gap-2">
      <button aria-label="Movavi Screen Recorder">
        <Small>
          <rect x="0.500" y="0.500" width="15" height="15" rx="2" fill="#16ef86" />
          <path d="M8 3l2 2-2 2-2-2zM8 9l2 2-2 2-2-2zM5 6l2 2-2 2-2-2zM11 6l2 2-2 2-2-2z" fill="#06381f" />
        </Small>
      </button>
      <button aria-label="Search">
        <Small>
          <circle cx="9.500" cy="6" r="4.500" fill="none" stroke="#ef7d16" strokeWidth="2.200" />
          <path d="M6 9.500L1 15" stroke="#ef7d16" strokeWidth="2.500" />
        </Small>
      </button>
      <button aria-label="Action Center">
        <Small>
          <path d="M1.500 1v14" stroke="#fff" strokeWidth="1.500" />
          <path d="M3 2.500h4l1 1h6V9H8L7 8H3z" fill="#fff" />
          <path d="M10.500 6.500l5 9h-10z" fill="#f5d32c" stroke="#a38408" strokeWidth="0.600" />
          <path d="M10.500 9.500v3M10.500 13.300v1.200" stroke="#222" strokeWidth="1.200" />
        </Small>
      </button>
      <button aria-label="Network">
        <Small>
          <path d="M6.500 3.500h8v7h-8zM10.500 11v3M7 14.500h7M3 7v7.500h3" fill="none" stroke="#fff" strokeWidth="1.300" />
          <path d="M1 1.500h4V5L4 6.500H2L1 5z" fill="#5f5f5f" stroke="#fff" />
        </Small>
      </button>
      <button aria-label="Volume muted">
        <Small>
          <path d="M1 5.500h2l4-4v13l-4-4H1z" fill="#fff" />
          <circle cx="11.500" cy="11" r="4.500" fill="#dc3a33" />
          <path d="M9.500 9l4 4M13.500 9l-4 4" stroke="#fff" strokeWidth="1.400" />
        </Small>
      </button>
      <button className="mr-[15px] ml-1.5 text-center leading-4">
        <time>
          6:15 AM
          <br />
          4/14/2023
        </time>
      </button>
    </div>
  </footer>
);

const App: React.FC = () => (
  <div className="flex h-screen flex-col overflow-hidden bg-black font-['Open_Sans','Noto_Sans',sans-serif] text-xs">
    <main className="relative min-h-0 flex-1">
      <DesktopIcons />
      <ExplorerWindow />
    </main>
    <Taskbar />
  </div>
);

export default App;
